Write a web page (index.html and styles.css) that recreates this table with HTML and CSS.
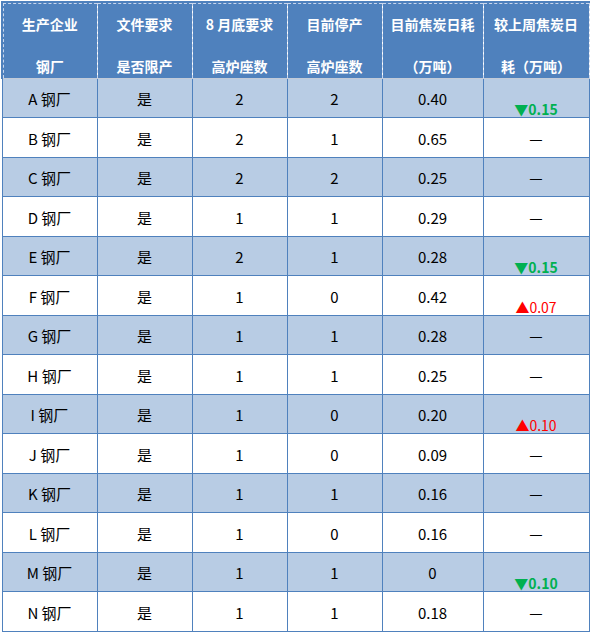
FILE: index.html
```html
<!DOCTYPE html>
<html lang="zh">
<head>
<meta charset="utf-8">
<link rel="stylesheet" href="styles.css">
</head>
<body>
<div class="wrap">
<table class="grid">
  <colgroup>
    <col class="c1"><col class="c2"><col class="c3"><col class="c4"><col class="c5"><col class="c6">
  </colgroup>
  <thead>
    <tr>
      <th><div class="hd"><span>生产企业</span><span>钢厂</span></div></th>
      <th><div class="hd"><span>文件要求</span><span>是否限产</span></div></th>
      <th><div class="hd"><span>8 月底要求</span><span>高炉座数</span></div></th>
      <th><div class="hd"><span>目前停产</span><span>高炉座数</span></div></th>
      <th><div class="hd"><span>目前焦炭日耗</span><span>（万吨）</span></div></th>
      <th><div class="hd"><span>较上周焦炭日</span><span>耗（万吨）</span></div></th>
    </tr>
  </thead>
  <tbody>
    <tr class="odd"><td>A 钢厂</td><td>是</td><td>2</td><td>2</td><td>0.40</td><td class="chg"><span class="down">▼0.15</span></td></tr>
    <tr><td>B 钢厂</td><td>是</td><td>2</td><td>1</td><td>0.65</td><td class="dash">—</td></tr>
    <tr class="odd"><td>C 钢厂</td><td>是</td><td>2</td><td>2</td><td>0.25</td><td class="dash">—</td></tr>
    <tr><td>D 钢厂</td><td>是</td><td>1</td><td>1</td><td>0.29</td><td class="dash">—</td></tr>
    <tr class="odd"><td>E 钢厂</td><td>是</td><td>2</td><td>1</td><td>0.28</td><td class="chg"><span class="down">▼0.15</span></td></tr>
    <tr><td>F 钢厂</td><td>是</td><td>1</td><td>0</td><td>0.42</td><td class="chg"><span class="up">▲0.07</span></td></tr>
    <tr class="odd"><td>G 钢厂</td><td>是</td><td>1</td><td>1</td><td>0.28</td><td class="dash">—</td></tr>
    <tr><td>H 钢厂</td><td>是</td><td>1</td><td>1</td><td>0.25</td><td class="dash">—</td></tr>
    <tr class="odd"><td>I 钢厂</td><td>是</td><td>1</td><td>0</td><td>0.20</td><td class="chg"><span class="up">▲0.10</span></td></tr>
    <tr><td>J 钢厂</td><td>是</td><td>1</td><td>0</td><td>0.09</td><td class="dash">—</td></tr>
    <tr class="odd"><td>K 钢厂</td><td>是</td><td>1</td><td>1</td><td>0.16</td><td class="dash">—</td></tr>
    <tr><td>L 钢厂</td><td>是</td><td>1</td><td>0</td><td>0.16</td><td class="dash">—</td></tr>
    <tr class="odd"><td>M 钢厂</td><td>是</td><td>1</td><td>1</td><td>0</td><td class="chg"><span class="down">▼0.10</span></td></tr>
    <tr><td>N 钢厂</td><td>是</td><td>1</td><td>1</td><td>0.18</td><td class="dash">—</td></tr>
  </tbody>
</table>
</div>
</body>
</html>
```

FILE: styles.css
```css
html, body {
  margin: 0;
  padding: 0;
  background: #ffffff;
}

.wrap {
  padding: 1px 0 0 1px;
}

.grid {
  border-collapse: collapse;
  table-layout: fixed;
  width: 588px;
  font-family: "Noto Sans CJK SC", "Open Sans", sans-serif;
  color: #000000;
}

.c1, .c2, .c3, .c4 { width: 95px; }
.c5 { width: 101px; }
.c6 { width: 106px; }

thead th {
  background: #4f81bd;
  color: #ffffff;
  font-size: 14px;
  font-weight: bold;
  padding: 0;
  vertical-align: top;
  border-left: 1px dashed #c9d6ec;
  border-right: 1px dashed #c9d6ec;
  border-top: 2px solid #4f81bd;
  border-bottom: 1px solid #c3cbd8;
  position: relative;
}

thead th::before {
  content: "";
  position: absolute;
  left: 0;
  right: 0;
  top: 0;
  border-top: 1px dashed #c9d6ec;
}

thead th:first-child {
  border-left: 2px solid #4f81bd;
}

thead th:first-child::after {
  content: "";
  position: absolute;
  left: 0;
  top: 0;
  bottom: 0;
  border-left: 1px dashed #c9d6ec;
}

.hd {
  height: 75px;
}

.hd span {
  display: block;
  height: 42px;
  line-height: 42px;
  white-space: nowrap;
}

tbody td {
  height: 37px;
  padding: 1px 0 0;
  text-align: center;
  vertical-align: middle;
  font-size: 15px;
  border: 1px solid #4f81bd;
  background: #ffffff;
}

tbody tr:nth-child(even) td {
  height: 38px;
}

tbody tr.odd td {
  background: #b8cce4;
}

tbody td.chg {
  vertical-align: bottom;
  line-height: 15px;
}

.down {
  color: #00b050;
  font-weight: bold;
  font-size: 14px;
}

.up {
  color: #ff0000;
  font-size: 14px;
}
```
